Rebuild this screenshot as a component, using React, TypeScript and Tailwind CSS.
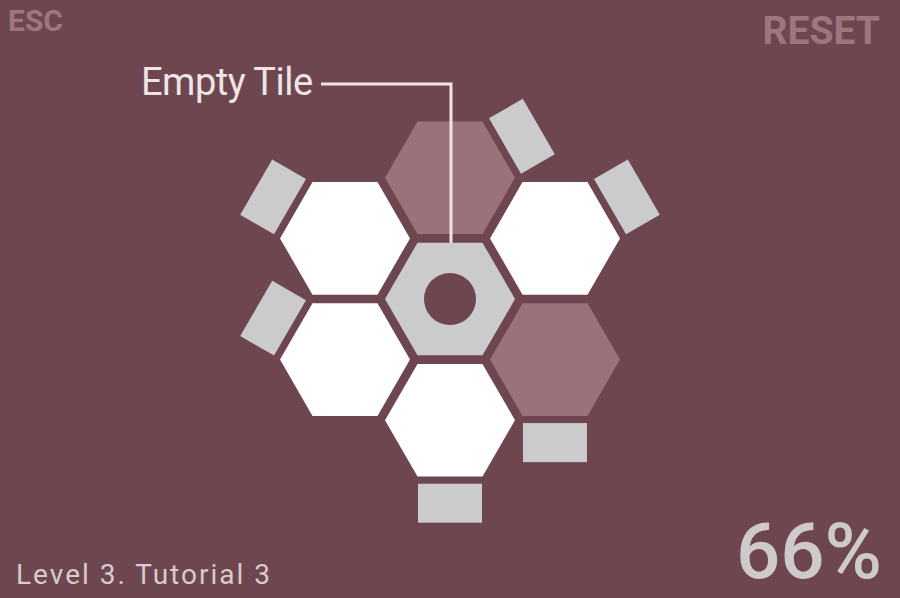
import React from 'react'

const R = 65
const GAP = 70
const CX = 450
const CY = 299

type Tile = { q: string; x: number; y: number; fill: string; piece?: number }

const hexPoints = (cx: number, cy: number, r: number) =>
  [0, 60, 120, 180, 240, 300]
    .map((a) => {
      const t = (a * Math.PI) / 180
      return `${(cx + r * Math.cos(t)).toFixed(1)},${(cy + r * Math.sin(t)).toFixed(1)}`
    })
    .join(' ')

const dy = (Math.sqrt(3) / 2) * GAP
const dx = 1.5 * GAP

// piece = angle of the edge normal the little gray block sits on
const tiles: Tile[] = [
  { q: 'top', x: CX, y: CY - 2 * dy, fill: '#9b727a', piece: -30 },
  { q: 'ul', x: CX - dx, y: CY - dy, fill: '#ffffff', piece: -150 },
  { q: 'ur', x: CX + dx, y: CY - dy, fill: '#ffffff', piece: -30 },
  { q: 'll', x: CX - dx, y: CY + dy, fill: '#ffffff', piece: -150 },
  { q: 'lr', x: CX + dx, y: CY + dy, fill: '#9b727a', piece: 90 },
  { q: 'bot', x: CX, y: CY + 2 * dy, fill: '#ffffff', piece: 90 },
]

function Board() {
  return (
    <svg width="900" height="598" viewBox="0 0 900 598" className="absolute inset-0">
      {tiles.map((t) => (
        <polygon key={t.q} points={hexPoints(t.x, t.y, R)} fill={t.fill} />
      ))}
      {tiles.map((t) => {
        if (t.piece === undefined) return null
        const a = (t.piece * Math.PI) / 180
        const px = t.x + 83 * Math.cos(a)
        const py = t.y + 83 * Math.sin(a)
        return (
          <rect
            key={t.q + '-p'}
            x={-32}
            y={-19.5}
            width={64}
            height={39}
            fill="#cccbcb"
            transform={`translate(${px.toFixed(1)} ${py.toFixed(1)}) rotate(${t.piece - 90})`}
          />
        )
      })}
      {/* empty tile in the middle */}
      <polygon points={hexPoints(CX, CY, R)} fill="#cccbcb" />
      <circle cx={CX} cy={CY} r={26} fill="#6e4650" />
      <polyline points="321,84 451,84 451,243" fill="none" stroke="#ece4e5" strokeWidth={3} />
    </svg>
  )
}

export default function App() {
  return (
    <div
      className="relative w-[900px] h-[598px] overflow-hidden bg-[#6e4650]"
      style={{ fontFamily: 'Roboto, "Open Sans", sans-serif' }}
    >
      <Board />
      <div className="relative flex flex-col justify-between h-full">
        <div className="flex justify-between items-start">
          <span className="pl-2 pt-[6px] text-[30px] font-bold leading-none text-[#9f767e]">ESC</span>
          <span className="pr-5 pt-[12px] text-[39px] font-bold leading-none text-[#9f767e]">RESET</span>
        </div>
        <div className="flex justify-between items-end">
          <span className="pl-4 pb-[9px] text-[28px] leading-none tracking-[2px] text-[#d8cacd]">Level 3. Tutorial 3</span>
          <span className="pr-[18px] pb-[7px] text-[78px] font-medium leading-none text-[#cecaca]">66%</span>
        </div>
      </div>
      <span className="absolute left-[141px] top-[63px] text-[38px] leading-none tracking-[-0.5px] text-[#ece4e5]">
        Empty Tile
      </span>
    </div>
  )
}
